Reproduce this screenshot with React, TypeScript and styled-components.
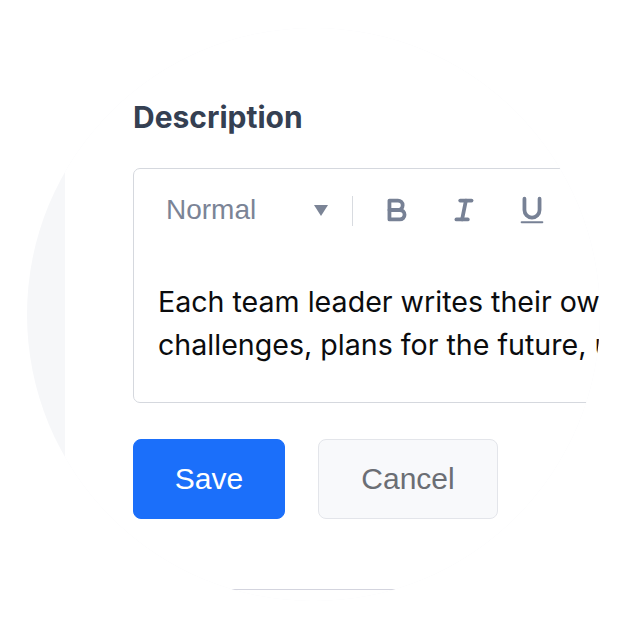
import styled, { createGlobalStyle } from 'styled-components';

const GlobalStyle = createGlobalStyle`
  html, body {
    margin: 0;
    padding: 0;
    background: #ffffff;
  }
  body {
    font-family: Inter, 'Liberation Sans', sans-serif;
  }
`;

const Stage = styled.div`
  width: 627px;
  height: 627px;
  padding: 28px 0 0 27px;
  box-sizing: border-box;
  overflow: hidden;
`;

/* the whole scene is cut by a round mask */
const Lens = styled.div`
  width: 573px;
  height: 573px;
  border-radius: 50%;
  overflow: hidden;
  background: #f6f7f9;
  display: flex;
`;

const Panel = styled.section`
  flex: 1;
  margin-left: 38px;
  background: #ffffff;
  padding: 72px 0 0 68px;
  display: flex;
  flex-direction: column;
`;

const Label = styled.h2`
  margin: 0;
  font-family: Inter, sans-serif;
  font-weight: 700;
  font-size: 30px;
  line-height: 34px;
  color: #354052;
`;

const Editor = styled.div`
  margin-top: 34px;
  width: 560px;
  border: 1px solid #d5d8de;
  border-radius: 7px;
`;

const Toolbar = styled.div`
  height: 82px;
  display: flex;
  align-items: center;
  padding-left: 32px;
`;

const Picker = styled.div`
  width: 164px;
  display: flex;
  align-items: center;
  justify-content: space-between;
  font-family: 'Liberation Sans', Arial, sans-serif;
  font-size: 28px;
  color: #7b8496;
`;

const Caret = styled.span`
  width: 0;
  height: 0;
  margin-right: 2px;
  border-left: 7px solid transparent;
  border-right: 7px solid transparent;
  border-top: 11px solid #7b8496;
`;

const Divider = styled.span`
  width: 1px;
  height: 30px;
  margin: 2px 10px 0 22px;
  background: #d8dbe0;
`;

const ToolButton = styled.button`
  width: 67.5px;
  height: 46px;
  padding: 0;
  border: none;
  background: none;
  display: flex;
  align-items: center;
  justify-content: center;

  svg {
    width: 34px;
    height: 34px;
  }
  .stroke {
    fill: none;
    stroke: #778195;
    stroke-width: 2;
    stroke-linecap: round;
    stroke-linejoin: round;
  }
  .fill {
    fill: #778195;
  }
`;

const Body = styled.div`
  padding: 29px 0 36px 24px;
  font-family: Inter, sans-serif;
  font-size: 28.6px;
  line-height: 43px;
  color: #0b0c0e;
  white-space: nowrap;
`;

const Actions = styled.div`
  margin-top: 36px;
  display: flex;
  gap: 33px;
`;

const Button = styled.button<{ $primary?: boolean }>`
  height: 80px;
  width: ${(p) => (p.$primary ? '152px' : '180px')};
  box-sizing: border-box;
  border-radius: 8px;
  border: 1px solid ${(p) => (p.$primary ? '#1b6ffa' : '#e3e5ea')};
  background: ${(p) => (p.$primary ? '#1b6ffa' : '#f8f9fb')};
  color: ${(p) => (p.$primary ? '#ffffff' : '#6b6e74')};
  font-family: 'Liberation Sans', Arial, sans-serif;
  font-size: 30px;
  padding: 0;
`;

const Rule = styled.hr`
  margin: 70px 0 0 -68px;
  border: none;
  border-top: 1px solid #d3d4de;
`;

const BoldIcon = () => (
  <svg viewBox="0 0 18 18">
    <path className="stroke" d="M5,4H9.5A2.5,2.5,0,0,1,12,6.5v0A2.5,2.5,0,0,1,9.5,9H5A0,0,0,0,1,5,9V4A0,0,0,0,1,5,4Z" />
    <path className="stroke" d="M5,9h5.5A2.5,2.5,0,0,1,13,11.5v0A2.5,2.5,0,0,1,10.5,14H5a0,0,0,0,1,0,0V9A0,0,0,0,1,5,9Z" />
  </svg>
);

const ItalicIcon = () => (
  <svg viewBox="0 0 18 18">
    <line className="stroke" x1="7" x2="13" y1="4" y2="4" />
    <line className="stroke" x1="5" x2="11" y1="14" y2="14" />
    <line className="stroke" x1="8" x2="10" y1="14" y2="4" />
  </svg>
);

const UnderlineIcon = () => (
  <svg viewBox="0 0 18 18">
    <path className="stroke" d="M5,3V9a4.012,4.012,0,0,0,4,4H9a4.012,4.012,0,0,0,4-4V3" />
    <rect className="fill" x="3" y="15" width="12" height="1" rx="0.5" ry="0.5" />
  </svg>
);

const App = () => {
  return (
    <>
      <GlobalStyle />
      <Stage>
        <Lens>
          <Panel>
            <Label>Description</Label>
            <Editor>
              <Toolbar>
                <Picker>
                  Normal
                  <Caret />
                </Picker>
                <Divider />
                <ToolButton aria-label="Bold">
                  <BoldIcon />
                </ToolButton>
                <ToolButton aria-label="Italic">
                  <ItalicIcon />
                </ToolButton>
                <ToolButton aria-label="Underline">
                  <UnderlineIcon />
                </ToolButton>
              </Toolbar>
              <Body>
                Each team leader writes their own monthly report with results,
                <br />
                challenges, plans for the future, updates and next steps.
              </Body>
            </Editor>
            <Actions>
              <Button $primary>Save</Button>
              <Button>Cancel</Button>
            </Actions>
            <Rule />
          </Panel>
        </Lens>
      </Stage>
    </>
  );
};

export default App;
